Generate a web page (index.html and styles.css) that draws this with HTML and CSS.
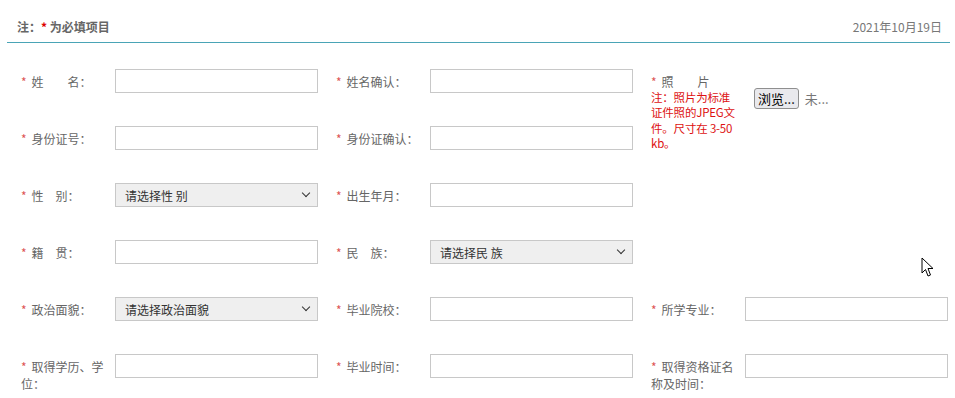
FILE: index.html
```html
<!DOCTYPE html>
<html lang="zh-CN">
<head>
    <meta charset="UTF-8">
    <title>报名信息</title>
    <link rel="stylesheet" href="styles.css">
</head>
<body>
    <div class="page">
        <div class="top-bar">
            <span class="notice">注：<em class="req">*</em> 为必填项目</span>
            <span class="date">2021年10月19日</span>
        </div>
        <form class="info-form">
            <div class="field">
                <label class="field-label"><i>*</i>姓　　名：</label>
                <input type="text" class="text-input">
            </div>
            <div class="field">
                <label class="field-label"><i>*</i>姓名确认：</label>
                <input type="text" class="text-input">
            </div>
            <div class="field photo-field">
                <div class="field-label">
                    <i>*</i>照　　片
                    <p class="photo-tip">注：照片为标准证件照的JPEG文件。尺寸在 3-50 kb。</p>
                </div>
                <div class="file-box">
                    <button type="button" class="file-btn">浏览...</button>
                    <span class="file-name">未...</span>
                </div>
            </div>
            <div class="field">
                <label class="field-label"><i>*</i>身份证号：</label>
                <input type="text" class="text-input">
            </div>
            <div class="field">
                <label class="field-label"><i>*</i>身份证确认：</label>
                <input type="text" class="text-input">
            </div>
            <div class="field">
                <label class="field-label"><i>*</i>性　别：</label>
                <div class="select-wrap">
                    <select class="select-input"><option>请选择性 别</option></select>
                </div>
            </div>
            <div class="field">
                <label class="field-label"><i>*</i>出生年月：</label>
                <input type="text" class="text-input">
            </div>
            <div class="field"></div>
            <div class="field">
                <label class="field-label"><i>*</i>籍　贯：</label>
                <input type="text" class="text-input">
            </div>
            <div class="field">
                <label class="field-label"><i>*</i>民　族：</label>
                <div class="select-wrap">
                    <select class="select-input"><option>请选择民 族</option></select>
                </div>
            </div>
            <div class="field"></div>
            <div class="field">
                <label class="field-label"><i>*</i>政治面貌：</label>
                <div class="select-wrap">
                    <select class="select-input"><option>请选择政治面貌</option></select>
                </div>
            </div>
            <div class="field">
                <label class="field-label"><i>*</i>毕业院校：</label>
                <input type="text" class="text-input">
            </div>
            <div class="field">
                <label class="field-label"><i>*</i>所学专业：</label>
                <input type="text" class="text-input">
            </div>
            <div class="field">
                <label class="field-label"><i>*</i>取得学历、学位：</label>
                <input type="text" class="text-input">
            </div>
            <div class="field">
                <label class="field-label"><i>*</i>毕业时间：</label>
                <input type="text" class="text-input">
            </div>
            <div class="field">
                <label class="field-label"><i>*</i>取得资格证名称及时间：</label>
                <input type="text" class="text-input">
            </div>
        </form>
    </div>

    <svg class="cursor" width="14" height="21" viewBox="0 0 14 21">
        <path d="M1 1 L1 16 L4.5 12.5 L7 19 L9.5 18 L7 11.5 L12 11.5 Z" fill="#fff" stroke="#000" stroke-width="1"/>
    </svg>
</body>
</html>
```

FILE: styles.css
```css
body, html {
    margin: 0;
    background: #fff;
    font-family: "Noto Sans CJK SC", "Noto Sans", sans-serif;
    font-size: 12px;
    color: #666;
}
.page {
    margin: 0 5px 0 7px;
}
.top-bar {
    display: flex;
    justify-content: space-between;
    align-items: center;
    height: 43px;
    padding: 11px 8px 0 10px;
    box-sizing: border-box;
    border-bottom: 1px solid #4aa4b6;
    line-height: 16px;
}
.notice {
    font-weight: bold;
    color: #666;
}
.notice .req {
    font-style: normal;
    color: #d00;
}
.date {
    color: #777;
}
.info-form {
    display: grid;
    grid-template-columns: repeat(3, 297px);
    grid-template-rows: repeat(5, 24px) auto;
    column-gap: 18px;
    row-gap: 33px;
    padding: 26px 0 20px 14px;
}
.field {
    display: flex;
    align-items: flex-start;
    min-width: 0;
}
.field-label {
    flex: 0 0 94px;
    box-sizing: border-box;
    padding: 4px 10px 0 0;
    line-height: 17px;
    color: #666;
}
.field-label i {
    font-style: normal;
    color: #d55;
    margin-right: 5px;
}
.text-input {
    width: 204px;
    height: 24px;
    box-sizing: border-box;
    margin: 0;
    border: 1px solid #c8c8c8;
    background: #fff;
}
.select-wrap {
    position: relative;
    width: 203px;
}
.select-wrap::after {
    content: "";
    position: absolute;
    right: 9px;
    top: 7px;
    width: 5px;
    height: 5px;
    border-right: 1.5px solid #333;
    border-bottom: 1.5px solid #333;
    transform: rotate(45deg);
    pointer-events: none;
}
.select-input {
    appearance: none;
    width: 100%;
    height: 24px;
    box-sizing: border-box;
    margin: 0;
    padding: 0 0 0 9px;
    border: 1px solid #c8c8c8;
    border-radius: 0;
    background: #efefef;
    font-family: inherit;
    font-size: 12px;
    color: #333;
}
.photo-field {
    grid-column: 3;
    grid-row: 1 / span 2;
}
.photo-field .field-label {
    padding-top: 5px;
    line-height: 15.5px;
}
.photo-tip {
    margin: 0;
    width: 86px;
    font-size: 11.5px;
    letter-spacing: -0.2px;
    color: #d11;
}
.file-box {
    display: flex;
    align-items: center;
    margin: 19px 0 0 7px;
}
.file-btn {
    height: 21px;
    padding: 0 3px;
    border: 1px solid #8f8f8f;
    border-radius: 3px;
    background: #e9e9ed;
    font-family: inherit;
    font-size: 13px;
    color: #000;
    line-height: 18px;
}
.file-name {
    margin-left: 6px;
    font-size: 13px;
    color: #777;
}
.cursor {
    position: absolute;
    left: 921px;
    top: 257px;
}
```
